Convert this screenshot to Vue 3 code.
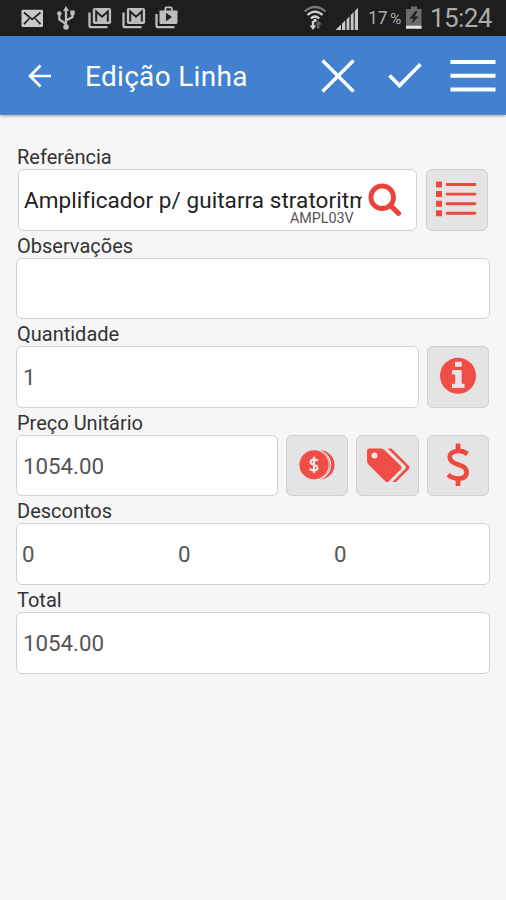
<script setup>
const discounts = ['0', '0', '0']
</script>

<template>
  <div class="screen">
    <div class="status">
      <div class="notifications">
        <svg viewBox="0 0 34 36" width="34" height="36">
          <rect x="6.500" y="9.700" width="21.500" height="17.300" rx="1" fill="#c9c9c9" />
          <path d="M9 12.500L17.200 19.300L25.500 12.500M9 24.200L14.300 18.500M25.500 24.200L20.200 18.500" fill="none" stroke="#222" stroke-width="1.700" />
        </svg>
        <svg viewBox="0 0 34 36" width="34" height="36">
          <path d="M17 10V27M17 24L10.300 19.500V14M17 20.500L23.500 17V12" fill="none" stroke="#bdbdbd" stroke-width="2.300" />
          <path d="M17 6L20 11H14Z" fill="#bdbdbd" />
          <circle cx="17" cy="27" r="2.800" fill="#bdbdbd" />
          <circle cx="10.300" cy="13.500" r="2.300" fill="#bdbdbd" />
          <rect x="21.300" y="10.500" width="4.400" height="4.400" fill="#bdbdbd" />
        </svg>
        <svg v-for="n in 2" :key="n" class="mail" viewBox="0 0 34 36" width="34" height="36">
          <path d="M6.500 12.500V25.500Q6.500 27.200 8.200 27.200H24.500" fill="none" stroke="#bdbdbd" stroke-width="2.300" />
          <rect x="9.800" y="8" width="18.300" height="16" rx="1.800" fill="#bdbdbd" />
          <path d="M13.200 21.500V11.500L19 16.700L24.800 11.500V21.500" fill="none" stroke="#222" stroke-width="2" />
        </svg>
        <svg viewBox="0 0 34 36" width="34" height="36">
          <path d="M6.500 14V25.500Q6.500 27.200 8.200 27.200H24.500" fill="none" stroke="#bdbdbd" stroke-width="2.300" />
          <path d="M15.300 11V8.300Q15.300 7.300 16.300 7.300H20.800Q21.800 7.300 21.800 8.300V11" fill="none" stroke="#bdbdbd" stroke-width="1.800" />
          <path d="M9.500 10.500H27.500V22.500Q27.500 24 26 24H11Q9.500 24 9.500 22.500Z" fill="#bdbdbd" />
          <path d="M16 12.800L22 17L16 21.200Z" fill="#222" />
        </svg>
      </div>
      <div class="system">
        <svg viewBox="0 0 24 36" width="24" height="36">
          <path d="M1.500 11.500Q12 2.500 22.500 11.500" fill="none" stroke="#777" stroke-width="2.200" />
          <path d="M4.500 15Q12 8.200 19.500 15M7.800 18.500Q12 14.500 16.200 18.500" fill="none" stroke="#d0d0d0" stroke-width="2.300" />
          <circle cx="12" cy="20.500" r="1.800" fill="#d0d0d0" />
          <path d="M8.800 21H11.200V25.500H13.300L10 30L6.700 25.500H8.800Z" fill="#d0d0d0" />
          <path d="M14 28.500V24.500H12.500L15.500 20.500L18.700 24.500H16.400V28.500Z" fill="#666" />
        </svg>
        <svg class="signal" viewBox="0 0 24 36" width="24" height="36">
          <path d="M-.5 30L5 24.500V30ZM6 23.500L9.300 20.500V30H6ZM10.600 19.500L13.400 16.500V30H10.600ZM14.800 15L17.600 12V30H14.800ZM18.800 11L22 7.800V30H18.800Z" fill="#c8c8c8" />
        </svg>
        <span class="percent">17 <i>%</i></span>
        <svg viewBox="0 0 18 36" width="18" height="36">
          <path d="M5 6.500H11V9H15.500V28.500H0V9H5Z" fill="#6b6b6b" />
          <rect x="0" y="25.700" width="15.500" height="3" fill="#e4e4e4" />
          <path d="M9.500 11L3.500 18.500H7.500L5.500 24L12.500 16.500H8.500L11.500 11Z" fill="#1e1e1e" />
        </svg>
        <span class="clock">15:24</span>
      </div>
    </div>

    <header class="appbar">
      <svg class="back" viewBox="0 0 24 24" width="24" height="24">
        <path d="M12.500 1.500L2 12L12.500 22.500M2.500 12H23" fill="none" stroke="#fff" stroke-width="2.700" />
      </svg>
      <h1>Edição Linha</h1>
      <div class="actions">
        <svg viewBox="0 0 34 34" width="34" height="34">
          <path d="M1.500 1.500L32.500 32.500M32.500 1.500L1.500 32.500" stroke="#fff" stroke-width="3.400" />
        </svg>
        <svg viewBox="0 0 34 34" width="34" height="34">
          <path d="M1.500 16.500L11.500 26.500L32.500 5.200" fill="none" stroke="#fff" stroke-width="3.700" />
        </svg>
        <svg viewBox="0 0 46 34" width="46" height="34">
          <path d="M0.500 3H45.500M0.500 16.800H45.500M0.500 30.600H45.500" stroke="#fff" stroke-width="4" />
        </svg>
      </div>
    </header>

    <main class="form">
      <label>Referência</label>
      <div class="row reference">
        <div class="field">
          <span class="clip">Amplificador p/ guitarra stratoritmo</span>
          <svg class="search" viewBox="0 0 34 34" width="34" height="34">
            <circle cx="14.200" cy="14.200" r="11.300" fill="none" stroke="#ea4339" stroke-width="4.900" />
            <path d="M22.500 22.500L30.500 30.300" stroke="#ea4339" stroke-width="5.200" stroke-linecap="round" />
          </svg>
          <small class="code">AMPL03V</small>
        </div>
        <button>
          <svg viewBox="0 0 62 62" width="62" height="62">
            <path d="M10 12.500h6v6h-6zM10 22.100h6v6h-6zM10 31.700h6v6h-6zM10 41.300h6v6h-6z" fill="#f0483f" />
            <path d="M21 15.500H49M21 25.100H49M21 34.700H49M21 44.300H49" stroke="#f0483f" stroke-width="2.900" stroke-linecap="round" />
          </svg>
        </button>
      </div>

      <label>Observações</label>
      <div class="row"><div class="field"></div></div>

      <label>Quantidade</label>
      <div class="row with-buttons">
        <div class="field">1</div>
        <button>
          <svg viewBox="0 0 62 62" width="62" height="62">
            <circle cx="31" cy="29.800" r="18" fill="#f04d46" />
            <path d="M28 15.700h6.700v5H28zM25 24h9.700v13.700H37.500v4.300H25v-4.300h3.200v-9.200H25z" fill="#e9e4e3" />
          </svg>
        </button>
      </div>

      <label>Preço Unitário</label>
      <div class="row with-buttons">
        <div class="field">1054.00</div>
        <button>
          <svg viewBox="0 0 62 62" width="62" height="62">
            <circle cx="34" cy="29.800" r="14.500" fill="#f04d46" />
            <circle cx="30.200" cy="29.800" r="15" fill="#e4e4e4" />
            <circle cx="29.700" cy="29.800" r="14.300" fill="#f04d46" />
            <circle cx="28.500" cy="29.800" r="15" fill="#e4e4e4" />
            <circle cx="28" cy="29.800" r="14.600" fill="#f04d46" />
            <path d="M32 25.700Q29.500 23.900 27 24.500Q24.300 25.300 24.700 27.500Q25 29.100 28 29.700Q31.800 30.600 31.500 33Q31 35.700 27.500 35.400Q25.300 35.200 23.700 33.900M28 21.800V38" fill="none" stroke="#f3e6e5" stroke-width="2.200" />
          </svg>
        </button>
        <button>
          <svg viewBox="0 0 62 62" width="62" height="62">
            <path d="M29.500 13.500H34.500L52 31Q53 32.500 52 33.800L39 47H35.500L48.500 33.500Q49.500 32.300 48.500 31L30.500 13.500Z" fill="#f04d46" />
            <path d="M10 15.500Q10 13.500 12 13.500H24Q26 13.500 27.500 15L44 31Q45.300 32.500 44 34L31.500 46.500Q30 47.500 28.500 46.500L11.500 29.500Q10 28 10 26Z" fill="#f04d46" />
            <circle cx="17.500" cy="20.500" r="3" fill="#f3e6e5" />
          </svg>
        </button>
        <button>
          <svg viewBox="0 0 62 62" width="62" height="62">
            <path d="M40.500 19Q35.800 15.600 30.500 16Q22.500 16.700 22.700 22.500Q22.900 27 31 29.500Q39.800 31.800 39.700 37.500Q39.300 43.500 31.500 43.700Q25.500 43.700 21 39.800M31 8.500V16M31 43.500V51" fill="none" stroke="#f0483f" stroke-width="4.700" />
          </svg>
        </button>
      </div>

      <label>Descontos</label>
      <div class="row">
        <div class="field discounts">
          <span v-for="(d, i) in discounts" :key="i">{{ d }}</span>
        </div>
      </div>

      <label>Total</label>
      <div class="row"><div class="field">1054.00</div></div>
    </main>
  </div>
</template>

<style>
body {
  margin: 0;
  background: #f6f6f6;
}
</style>

<style scoped>
.screen {
  width: 506px;
  height: 900px;
  overflow: hidden;
  background: #f6f6f6;
  font-family: Roboto, "Liberation Sans", sans-serif;
}
svg {
  display: block;
  flex: none;
}
.status {
  height: 36px;
  display: flex;
  justify-content: space-between;
  background: #1e1e1e;
  color: #ababab;
}
.notifications {
  display: flex;
  padding-left: 15px;
}
.mail {
  margin-right: -0.300px;
}
.system {
  display: flex;
  align-items: center;
  width: 203px;
}
.signal {
  margin-left: 9px;
}
.percent {
  width: 38px;
  margin-left: 8px;
  font-size: 17.500px;
  line-height: 36px;
  white-space: nowrap;
}
.percent i {
  margin-left: -2px;
  font-size: 15.500px;
  font-style: normal;
}
.clock {
  margin-left: 6px;
  font-size: 26px;
  line-height: 36px;
  letter-spacing: -0.600px;
}
.appbar {
  box-sizing: border-box;
  height: 79px;
  display: flex;
  align-items: center;
  padding: 1px 10px 0 28px;
  background: #4181d0;
  border-bottom: 1px solid #5e88bd;
  box-shadow: 0 1px 3px rgba(0, 0, 0, 0.35);
}
h1 {
  margin: 2px 0 0 33px;
  font-size: 28px;
  font-weight: 400;
  line-height: 40px;
  letter-spacing: 0.300px;
  color: #fff;
  white-space: nowrap;
}
.actions {
  display: flex;
  margin-left: auto;
}
.actions svg + svg {
  margin-left: 33px;
}
.actions svg:last-child {
  margin-left: 28px;
}
.form {
  padding: 27px 16px 0;
}
label {
  display: block;
  height: 27px;
  padding-left: 1px;
  font-size: 20px;
  line-height: 31px;
  color: #333;
}
.row {
  display: flex;
  gap: 8px;
  height: 61.600px;
}
.with-buttons {
  padding-right: 1px;
}
.field {
  flex: 1;
  box-sizing: border-box;
  display: flex;
  align-items: center;
  min-width: 0;
  padding-left: 6px;
  border: 1.500px solid #d2d2d2;
  border-radius: 6px;
  background: #fff;
  font-size: 22.300px;
  color: #555;
}
.reference {
  gap: 9px;
  padding: 0 2px;
}
.reference .field {
  position: relative;
  padding-left: 5px;
  font-size: 22.500px;
  letter-spacing: 0.060px;
  color: #222;
}
.clip {
  width: 338px;
  overflow: hidden;
  white-space: nowrap;
}
.search {
  margin: 1px 0 0 6px;
}
.code {
  position: absolute;
  left: 271px;
  bottom: 3px;
  font-size: 14.300px;
  line-height: 18px;
  letter-spacing: 0;
  color: #555;
}
button {
  flex: none;
  box-sizing: border-box;
  width: 62.300px;
  height: 61.600px;
  margin: 0;
  padding: 0;
  display: flex;
  align-items: center;
  justify-content: center;
  border: 1.500px solid #d0d0d0;
  border-radius: 6px;
  background: #e4e4e4;
}
.discounts {
  padding-left: 5px;
}
.discounts span {
  width: 156px;
  flex: none;
}
</style>
